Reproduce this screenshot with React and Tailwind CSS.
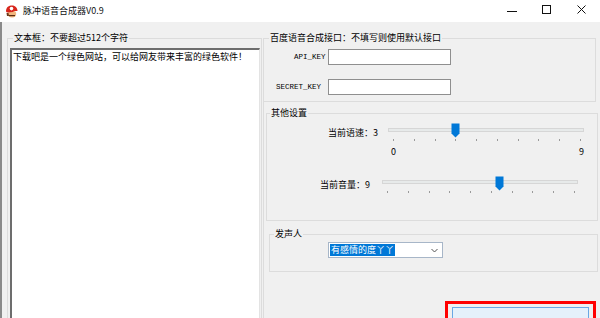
import React from "react";

function Slider({ thumb, withLabels }) {
  return (
    <div className="relative w-[196px] flex flex-col">
      <div className={(withLabels ? "mt-[5px]" : "mt-[4px]") + " h-[4px] bg-[#e7eaea] border border-[#d6d6d6]"} />
      <svg className="absolute top-0" style={{ left: thumb }} width="9" height="15" viewBox="0 0 9 15">
        <polygon points="0.5,0.5 8.5,0.5 8.5,10.5 4.5,14.5 0.5,10.5" fill="#0078d7" />
      </svg>
      <div className="mt-[7px] ml-[5px] w-[188px] flex justify-between">
        {Array.from({ length: 10 }).map((_, i) => (
          <div key={i} className="w-px h-[2px] bg-[#9a9a9a]" />
        ))}
      </div>
      {withLabels && (
        <div className="mt-[5px] pl-[3px] flex justify-between leading-[12px]">
          <span>0</span>
          <span>9</span>
        </div>
      )}
    </div>
  );
}

export default function App() {
  return (
    <div className="w-[600px] h-[318px] overflow-hidden bg-[#f0f0f0] text-black text-[9px] leading-[12px] font-['Noto_Sans_CJK_SC','Noto_Sans',sans-serif] flex flex-col">
      {/* title bar */}
      <div className="h-[22px] bg-white flex items-center shrink-0">
        <svg className="ml-[5px]" width="13" height="13" viewBox="0 0 13 13">
          <ellipse cx="7" cy="9" rx="4.2" ry="3.4" fill="#f2b77e" />
          <path d="M1 6.5 C1 2 4 0.5 7 0.5 C10.5 0.5 12.5 3 12.5 6 L9 6 L8 7 L2 7.5 Z" fill="#d8261c" />
          <circle cx="6.5" cy="3.6" r="1.8" fill="#ffffff" />
          <path d="M4 10 L10 10 L10 11.2 L4 11.2 Z" fill="#5a2d12" />
          <path d="M1.5 8 L3.5 8 L4 11 L2 11 Z" fill="#6b3a1a" />
        </svg>
        <span className="ml-[5px] text-[#111]">脉冲语音合成器V0.9</span>
        <div className="flex-1" />
        <svg width="12" height="10" viewBox="0 0 12 10" className="mr-[24px]">
          <line x1="1" y1="5.5" x2="11" y2="5.5" stroke="#111" strokeWidth="1" />
        </svg>
        <svg width="10" height="10" viewBox="0 0 10 10" className="mr-[25px] mt-[-2px]">
          <rect x="0.5" y="0.5" width="8" height="8" fill="none" stroke="#111" strokeWidth="1" />
        </svg>
        <svg width="10" height="10" viewBox="0 0 10 10" className="mr-[13px] mt-[-2px]">
          <path d="M0.5 0.5 L8.5 8.5 M8.5 0.5 L0.5 8.5" stroke="#111" strokeWidth="1" />
        </svg>
      </div>

      {/* body */}
      <div className="flex-1 flex border-l-2 border-[#8a8a8a] pt-[10px]">
        {/* left group */}
        <fieldset className="ml-[5px] w-[255px] h-[300px] border border-[#dcdcdc] pl-[2px] pr-[1px] shrink-0">
          <legend className="ml-[3px] px-[1px] leading-[12px]">文本框：不要超过512个字符</legend>
          <div className="mt-[4px] h-[290px] bg-white border-t-2 border-l-2 border-t-[#6d6d6d] border-l-[#6d6d6d] border-r border-r-[#e3e3e3] pl-[1px] pt-[1px]">
            下载吧是一个绿色网站，可以给网友带来丰富的绿色软件！
          </div>
        </fieldset>

        {/* right column */}
        <div className="ml-[1px] w-[335px] flex flex-col shrink-0">
          <fieldset className="w-[333px] h-[70px] border border-[#dcdcdc]">
            <legend className="ml-[5px] px-[1px] leading-[12px]">百度语音合成接口：不填写则使用默认接口</legend>
            <div className="mt-[5px] flex items-center h-[16px]">
              <div className="w-[64px] pl-[30px] font-['Liberation_Mono',monospace] text-[7.5px] text-black">API_KEY</div>
              <div className="w-[123px] h-[16px] bg-white border border-[#8f8f8f]" />
            </div>
            <div className="mt-[14px] flex items-center h-[16px]">
              <div className="w-[64px] pl-[12px] font-['Liberation_Mono',monospace] text-[7.5px] text-black">SECRET_KEY</div>
              <div className="w-[123px] h-[16px] bg-white border border-[#8f8f8f]" />
            </div>
          </fieldset>

          <div className="flex-1 border-l border-[#dcdcdc] flex flex-col">
            <fieldset className="mt-[5px] ml-[2px] w-[332px] h-[114px] border border-[#dcdcdc]">
              <legend className="ml-[3px] px-[1px] leading-[12px]">其他设置</legend>
              <div className="mt-[4px] flex items-start">
                <div className="w-[121px] pl-[61px] mt-[4px] shrink-0">当前语速：3</div>
                <Slider thumb={63} withLabels />
              </div>
              <div className="mt-[18px] flex items-start">
                <div className="w-[115px] pl-[53px] mt-[3px] shrink-0">当前音量：9</div>
                <Slider thumb={113} />
              </div>
            </fieldset>

            <fieldset className="mt-[7px] ml-[5px] w-[329px] h-[44px] border border-[#dcdcdc]">
              <legend className="ml-[4px] px-[1px] leading-[12px]">发声人</legend>
              <div className="mt-[2px] ml-[58px] w-[115px] h-[16px] bg-white border border-[#a7b6c8] flex items-center pl-[1px] pr-[4px]">
                <span className="bg-[#0078d7] text-white leading-[12px] px-[1px]">有感情的度丫丫</span>
                <div className="flex-1" />
                <svg width="7" height="5" viewBox="0 0 7 5">
                  <path d="M0.5 1 L3.5 4 L6.5 1" fill="none" stroke="#555" strokeWidth="1" />
                </svg>
              </div>
            </fieldset>

            <div className="mt-[29px] ml-[181px] w-[151px] h-[40px] border-[3px] border-[#ff0000] pt-[3px] px-[4px]">
              <div className="h-[40px] bg-[#e5f1fb] border border-[#6aa8e4]" />
            </div>
          </div>
        </div>
      </div>
    </div>
  );
}
